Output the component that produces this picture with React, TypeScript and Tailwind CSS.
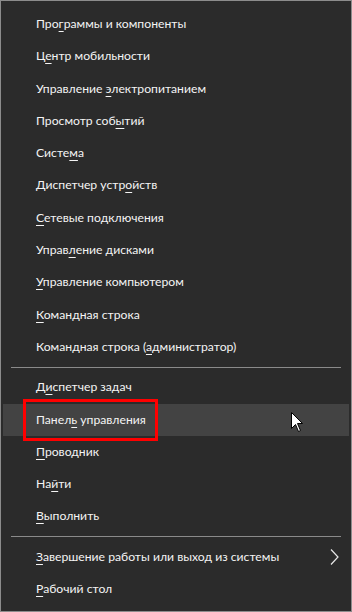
import React from "react";

type Item = { pre: string; key: string; post: string; hl?: boolean; arrow?: boolean };

const g1: Item[] = [
  { pre: "Про", key: "г", post: "раммы и компоненты" },
  { pre: "Ц", key: "е", post: "нтр мобильности" },
  { pre: "Управление ", key: "э", post: "лектропитанием" },
  { pre: "Просмотр соб", key: "ы", post: "тий" },
  { pre: "Систе", key: "м", post: "а" },
  { pre: "Диспетчер устр", key: "о", post: "йств" },
  { pre: "", key: "С", post: "етевые подключения" },
  { pre: "Управ", key: "л", post: "ение дисками" },
  { pre: "", key: "У", post: "правление компьютером" },
  { pre: "", key: "К", post: "омандная строка" },
  { pre: "Командная строка (", key: "а", post: "дминистратор)" },
];
const g2: Item[] = [
  { pre: "Д", key: "и", post: "спетчер задач" },
  { pre: "Панел", key: "ь", post: " управления", hl: true },
  { pre: "", key: "П", post: "роводник" },
  { pre: "На", key: "й", post: "ти" },
  { pre: "", key: "В", post: "ыполнить" },
];
const g3: Item[] = [
  { pre: "", key: "З", post: "авершение работы или выход из системы", arrow: true },
  { pre: "", key: "Р", post: "абочий стол" },
];

function Row({ it }: { it: Item }) {
  return (
    <div className={`relative flex items-center h-[32.3px] pl-[33px] pr-[10px] ${it.hl ? "bg-[#434343]" : ""}`}>
      <span className="whitespace-pre">
        {it.pre}
        <span className="underline underline-offset-[3px] decoration-1">{it.key}</span>
        {it.post}
      </span>
      {it.arrow && (
        <svg className="ml-auto" width="9" height="16" viewBox="0 0 9 16">
          <path d="M1 0.5 L8 8 L1 15.5" fill="none" stroke="#e8e8e8" strokeWidth="1.2" />
        </svg>
      )}
      {it.hl && (
        <>
          <div className="absolute left-[20px] top-[-5px] w-[135px] h-[42px] border-[3px] border-[#ff0000]" />
          <svg className="absolute left-[288px] top-[8px]" width="14" height="21" viewBox="0 0 14 21">
            <path d="M0.5 0.5 L0.5 16.5 L4.5 12.5 L7.5 19.5 L9.5 18.5 L6.5 11.5 L11.5 11.5 Z" fill="#ffffff" stroke="#000000" strokeWidth="1" />
          </svg>
        </>
      )}
    </div>
  );
}

function Sep() {
  return <div className="h-[8px] flex items-center pl-[8px] pr-[8px]"><div className="h-px w-full bg-[#8a8a8a]" /></div>;
}

export default function App() {
  return (
    <div
      className="w-[352px] h-[612px] bg-[#2b2b2b] border border-[#8c8c8c] text-[#f4f4f4] text-[12.2px] pt-[7px] px-[2px]"
      style={{ fontFamily: 'Lato, "Noto Sans", sans-serif' }}
    >
      {g1.map((it, i) => <Row key={i} it={it} />)}
      <Sep />
      {g2.map((it, i) => <Row key={i} it={it} />)}
      <Sep />
      {g3.map((it, i) => <Row key={i} it={it} />)}
    </div>
  );
}
